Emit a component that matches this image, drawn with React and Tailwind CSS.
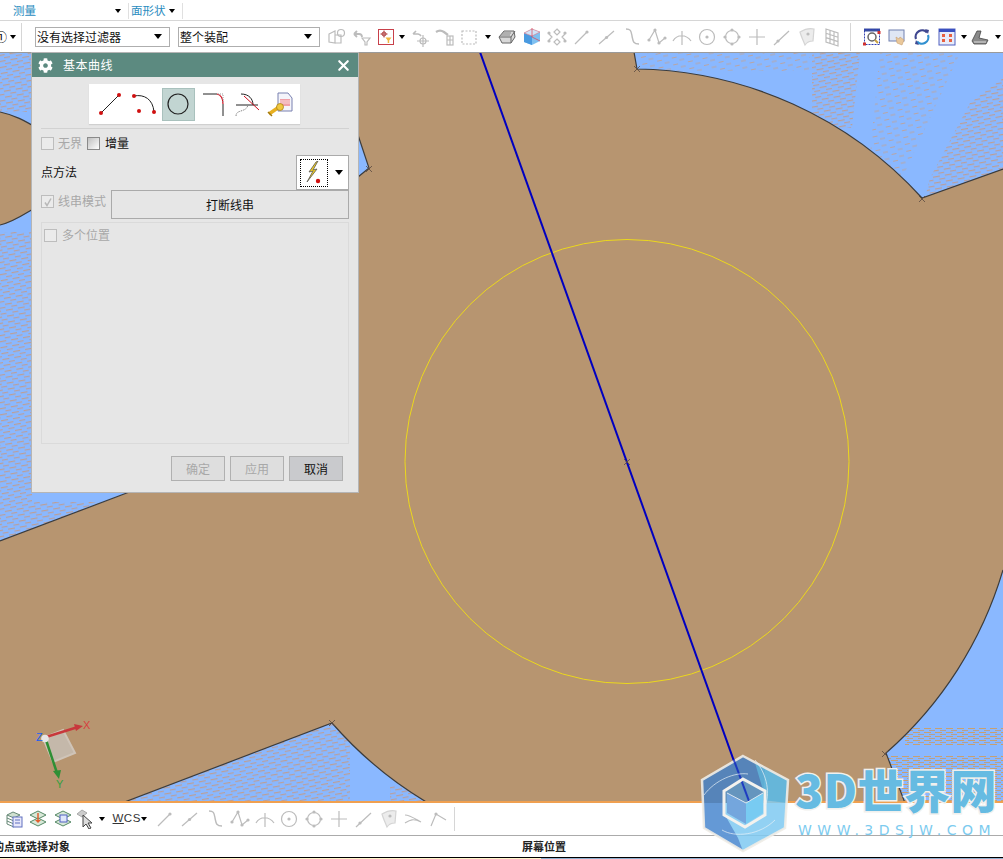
import React from "react";
import { FaCog } from "react-icons/fa";
import { X } from "lucide-react";

const FONT = "font-['Noto_Sans_CJK_SC','Liberation_Sans',sans-serif]";
const G = "#bcbcbc";

const Caret = ({ className = "" }) => (
  <span className={`block w-0 h-0 shrink-0 border-x-[3.5px] border-x-transparent border-t-[4px] border-t-black ${className}`} />
);

const Ic = ({ children, size = 22, box = 22 }) => (
  <svg width={size} height={size} viewBox={`0 0 ${box} ${box}`} fill="none" stroke={G} strokeWidth="1.2" className="shrink-0">
    {children}
  </svg>
);

const Cell = ({ w = "w-[25px]", children }) => <div className={`${w} h-[22px] shrink-0 flex items-center justify-center`}>{children}</div>;

const Dot = ({ x, y, r = 1.6, f = G }) => <circle cx={x} cy={y} r={r} fill={f} stroke="none" />;

const LineEnd = () => <Ic><path d="M4 18 16 6" /><Dot x={16} y={6} /></Ic>;
const LineMid = () => <Ic><path d="M3 18 18 5" /><Dot x={10.5} y={11.5} /></Ic>;
const SCurve = () => <Ic><path d="M5 3c5 0 5 2 6 7s1 8 7 8" strokeWidth="1.4" /></Ic>;
const Spline = () => <Ic><path d="M3 14 9 4l4 13 6-5" /><Dot x={3} y={14} /><Dot x={9} y={4} /><Dot x={13} y={17} /><Dot x={19} y={12} /></Ic>;
const ArcUp = () => <Ic><path d="M2 15C6 8 15 8 20 15M11 5v14" /></Ic>;
const CircleDot = () => <Ic><circle cx="11" cy="11" r="7.5" /><Dot x={11} y={11} /></Ic>;
const CircleQuad = () => <Ic><circle cx="11" cy="11" r="6.5" /><Dot x={11} y={4} /><Dot x={11} y={18} /><Dot x={4} y={11} /><Dot x={18} y={11} /></Ic>;
const Plus = () => <Ic><path d="M11 3v16M3 11h16" /></Ic>;
const LineDotLow = () => <Ic><path d="M3 19 18 5" /><Dot x={7} y={15} /></Ic>;
const Sheet = () => (
  <Ic><path d="M4 6c5-3 10-4 14-3l-1 12c-3 0-6 1-8 4C7 14 5 10 4 6Z" fill="#ececec" stroke="#d4d4d4" /><Dot x={12} y={8} /></Ic>
);
const Grid = () => <Ic><path d="M5 3l12 4v13L5 16ZM9 4.300v13M13 5.700v13M5 7.300l12 4M5 11.600l12 4" /></Ic>;

const Select = ({ w, text, className = "" }) => (
  <div className={`${w} ${className} h-[20px] shrink-0 border border-[#aeaeae] bg-white flex items-center justify-between pl-[1px] pr-[7px] text-[12px] text-[#111]`}>
    <span>{text}</span>
    <Caret className="border-x-[4px] border-t-[5px]" />
  </div>
);

const TopToolbar = () => (
  <div className="h-[31px] shrink-0 bg-white flex items-center">
    <span className="w-[7px] overflow-hidden text-[12px] leading-none flex justify-end"><span className="shrink-0">①</span></span>
    <Caret className="ml-[3px]" />
    <div className="ml-[5px] w-px h-[28px] bg-[#d6d6d6]" />
    <Select w="w-[135px]" text="没有选择过滤器" className="ml-[13px]" />
    <Select w="w-[142px]" text="整个装配" className="ml-[8px]" />
    <div className="ml-[5px] flex">
      <Cell w="w-[24.500px]">
        <Ic><path d="M3 8l6-3v12l-6-1ZM9 9h6v8H9" /><circle cx="15" cy="7" r="3.500" /></Ic>
      </Cell>
      <Cell w="w-[24.500px]">
        <Ic><path d="M3 8h5a3 3 0 0 1 3 3M3 8l3-3M3 8l3 3" strokeWidth="1.8" /><path d="M11 12h8l-3 4v3h-2v-3Z" /></Ic>
      </Cell>
      <Cell w="w-[24.500px]">
        <svg width="16" height="16" viewBox="0 0 16 16" fill="none" className="shrink-0">
          <rect x="0.500" y="0.500" width="15" height="15" stroke="#c8404a" />
          <circle cx="6" cy="5" r="2" stroke="#b04040" />
          <path d="M6 1.500v7M2.500 5h7" stroke="#b04040" />
          <path d="M7.500 8.500h6l-2.300 3v2.500h-1.500v-2.500Z" fill="#f0b840" />
        </svg>
      </Cell>
    </div>
    <Caret className="ml-[0.500px]" />
    <div className="ml-[3px] flex">
      <Cell w="w-[24.500px]">
        <Ic><path d="M4 8h5a4 4 0 0 1 3 2M4 8l3-3" strokeWidth="1.6" /><circle cx="14" cy="15" r="3" /><path d="M14 9v12M8 15h12" /></Ic>
      </Cell>
      <Cell w="w-[24.500px]">
        <Ic><path d="M2 6c3-2 5-2 8 0l4 3" strokeWidth="2.200" /><rect x="13" y="10" width="6" height="9" /><path d="M16 10v9M13 14h6" /></Ic>
      </Cell>
      <Cell w="w-[24.500px]">
        <Ic><rect x="4" y="5" width="14" height="13" strokeDasharray="2 1.500" /></Ic>
      </Cell>
    </div>
    <Caret className="ml-[3px]" />
    <div className="ml-[4px] flex">
      <Cell>
        <svg width="18" height="16" viewBox="0 0 18 16" className="shrink-0">
          <path d="M1 8 6 2h10l1 6-4 6H4Z" fill="#d8d8d8" stroke="#666" />
          <path d="M1 8h12v6M13 8l4-6" fill="none" stroke="#666" />
          <path d="M4 4h9M3 6h9" stroke="#888" />
        </svg>
      </Cell>
      <Cell>
        <svg width="18" height="18" viewBox="0 0 18 18" className="shrink-0">
          <path d="M1 5 9 1l8 3v9l-8 4-8-3Z" fill="#7fc0f0" />
          <path d="M9 8 1 5v9l8 3Z" fill="#4a9ae0" />
          <path d="M1 5 9 1l8 3-8 4Z" fill="#d0e4f8" stroke="#e07080" strokeWidth=".6" />
          <path d="M9 0v9l8 4" fill="none" stroke="#e04050" strokeWidth=".7" />
        </svg>
      </Cell>
      <Cell>
        <Ic><path d="M11 3l3 3-3 3-3-3ZM11 13l3 3-3 3-3-3ZM3 8l3 3-3 3M19 8l-3 3 3 3" /><Dot x={3} y={7} /><Dot x={19} y={7} /><Dot x={3} y={15} /><Dot x={19} y={15} /></Ic>
      </Cell>
      <Cell><LineEnd /></Cell>
      <Cell><LineMid /></Cell>
      <Cell><SCurve /></Cell>
      <Cell><Spline /></Cell>
      <Cell><ArcUp /></Cell>
      <Cell><CircleDot /></Cell>
      <Cell><CircleQuad /></Cell>
      <Cell><Plus /></Cell>
      <Cell><LineDotLow /></Cell>
      <Cell><Sheet /></Cell>
      <Cell><Grid /></Cell>
    </div>
    <div className="ml-[5px] w-px h-[28px] bg-[#d6d6d6]" />
    <div className="ml-[9px] flex">
      <Cell>
        <svg width="18" height="18" viewBox="0 0 18 18" fill="none" className="shrink-0">
          <path d="M1 2h16" stroke="#3a50a0" strokeWidth="3" />
          <rect x="1.500" y="1.500" width="15" height="15" stroke="#3040b0" strokeDasharray="2 1" />
          <circle cx="9" cy="9" r="4" stroke="#666" strokeWidth="1.500" />
          <path d="M12 12l3 3" stroke="#c8a040" strokeWidth="2" />
          <rect x="0" y="14.500" width="3" height="3" fill="#d03030" />
          <rect x="14.500" y="3" width="3" height="3" fill="#d03030" />
        </svg>
      </Cell>
      <Cell>
        <svg width="18" height="18" viewBox="0 0 18 18" fill="none" className="shrink-0">
          <rect x="1" y="2" width="15" height="11" fill="#dfe6f4" stroke="#7080b0" />
          <path d="M8 9l1 6 5 2 2-5-4-3-1 2Z" fill="#eac89a" stroke="#c8a070" strokeWidth=".6" />
        </svg>
      </Cell>
      <Cell>
        <svg width="18" height="18" viewBox="0 0 18 18" fill="none" className="shrink-0">
          <path d="M3 11A6.500 6.500 0 0 1 14 4.500" stroke="#404890" strokeWidth="2.200" />
          <path d="M15 7A6.500 6.500 0 0 1 4 13.500" stroke="#3090d0" strokeWidth="2.200" />
          <path d="M12 1l4 1-1 4ZM6 17l-4-1 1-4Z" fill="#404890" />
        </svg>
      </Cell>
      <Cell>
        <svg width="18" height="18" viewBox="0 0 18 18" fill="none" className="shrink-0">
          <rect x="1" y="1" width="16" height="16" fill="#e8ecfa" stroke="#5060c0" />
          <path d="M1 2.500h16" stroke="#3a50c0" strokeWidth="3" />
          <path d="M4 6h3v3H4ZM11 6h3v3h-3ZM4 11h3v3H4ZM11 11h3v3h-3Z" fill="#e86040" />
        </svg>
      </Cell>
    </div>
    <Caret className="ml-[1.500px]" />
    <Cell>
      <svg width="20" height="18" viewBox="0 0 20 18" className="shrink-0">
        <path d="M2 13 7 3h4l-2 7 9 2-2 4H4Z" fill="#8a8a8a" stroke="#444" strokeWidth=".8" />
        <path d="M4 14h12" stroke="#ddd" />
      </svg>
    </Cell>
    <Caret className="ml-[2.500px]" />
  </div>
);

const BottomToolbar = () => (
  <div className="h-[32px] shrink-0 bg-white border-b border-[#ababab] flex items-center box-content">
    <div className="ml-[1.500px] flex">
      <Cell w="w-[24.500px]">
        <svg width="18" height="18" viewBox="0 0 18 18" fill="none" className="shrink-0">
          <path d="M2 5l6-3 7 3-6 3Z" fill="#cfe0cf" stroke="#687" />
          <path d="M2 8l7 3M2 11l7 3M2 5v9l7 3" stroke="#687" />
          <rect x="8" y="7" width="9" height="10" fill="#e8e8fa" stroke="#6070c0" />
          <path d="M10 10h5M10 13h5" stroke="#6070c0" />
        </svg>
      </Cell>
      <Cell w="w-[24.500px]">
        <svg width="18" height="18" viewBox="0 0 18 18" fill="none" className="shrink-0">
          <path d="M1 5l8-4 8 4-8 4Z" fill="#d8e8d8" stroke="#586" />
          <path d="M1 12l8-4 8 4-8 4Z" fill="#d8e8d8" stroke="#586" />
          <path d="M9 3v8" stroke="#e06030" strokeWidth="1.500" />
          <path d="M6 10h6l-3 3Z" fill="#e06030" />
        </svg>
      </Cell>
      <Cell w="w-[24px]">
        <svg width="18" height="18" viewBox="0 0 18 18" fill="none" className="shrink-0">
          <path d="M1 5l8-4 8 4-8 4Z" fill="#d8e8d8" stroke="#586" />
          <path d="M1 12l8-4 8 4-8 4Z" fill="#d8e8d8" stroke="#586" />
          <rect x="6" y="5" width="7" height="7" fill="#dfe6fa" stroke="#5060c0" />
        </svg>
      </Cell>
    </div>
    <Cell w="w-[20px]">
      <svg width="18" height="20" viewBox="0 0 18 20" fill="none" className="shrink-0">
        <path d="M1 5l5-4 5 3-5 4Z" fill="#ccc" stroke="#aaa" />
        <path d="M7 6v12l3-3 3 5 2-1-3-5h4Z" fill="#ddd" stroke="#444" />
      </svg>
    </Cell>
    <Caret className="ml-[4px]" />
    <span className="ml-[8px] w-[24px] text-[11.500px] leading-none tracking-[0.5px] text-[#333] font-['Liberation_Sans',sans-serif]">
      <span className="underline">W</span>CS
    </span>
    <Caret className="ml-[4px]" />
    <div className="ml-[6.500px] flex">
      <Cell w="w-[24.800px]"><LineEnd /></Cell>
      <Cell w="w-[24.800px]"><LineMid /></Cell>
      <Cell w="w-[24.800px]"><SCurve /></Cell>
      <Cell w="w-[24.800px]"><Spline /></Cell>
      <Cell w="w-[24.800px]"><ArcUp /></Cell>
      <Cell w="w-[24.800px]"><CircleDot /></Cell>
      <Cell w="w-[24.800px]"><CircleQuad /></Cell>
      <Cell w="w-[24.800px]"><Plus /></Cell>
      <Cell w="w-[24.800px]"><LineDotLow /></Cell>
      <Cell w="w-[24.800px]"><Sheet /></Cell>
      <Cell w="w-[24.800px]"><Ic><path d="M3 7c5 0 12 5 16 7M3 15c5-3 8-5 16-1" /></Ic></Cell>
      <Cell w="w-[24.800px]"><Ic><path d="M4 18 9 6l10 6" /><Dot x={9} y={6} /></Ic></Cell>
    </div>
    <div className="ml-[3px] w-px h-[24px] bg-[#d6d6d6]" />
  </div>
);

const Mark = ({ x, y }) => <path d={`M${x - 3} ${y - 3}l6 6M${x + 3} ${y - 3}l-6 6`} stroke="#5a4a40" strokeWidth=".8" fill="none" />;

const INK = "#3c3c3c";

const Viewport = () => (
  <svg viewBox="0 53 1003 748" className="absolute inset-0 w-full h-full block">
    <defs>
      <pattern id="heavy" width="12" height="6" patternUnits="userSpaceOnUse" patternTransform="rotate(-10)">
        <rect x="0" y="0" width="7" height="1.200" fill="#bc9f96" />
        <rect x="6" y="3" width="7" height="1.200" fill="#b8a0a0" />
      </pattern>
      <pattern id="sparse" width="15" height="7" patternUnits="userSpaceOnUse" patternTransform="rotate(-12)">
        <rect x="0" y="0" width="5" height="1" fill="#b8a5a5" />
        <rect x="7" y="3.500" width="5" height="1" fill="#b8a5a5" />
      </pattern>
      <pattern id="warm" width="11" height="4" patternUnits="userSpaceOnUse">
        <rect x="0" y="0" width="7" height="1" fill="#c8a070" />
        <rect x="5" y="2" width="7" height="1" fill="#b8a08c" />
      </pattern>
    </defs>
    <rect x="0" y="52" width="1003" height="751" fill="#8ab8ff" />
    <rect x="0" y="52" width="32" height="60" fill="url(#heavy)" />
    <path d="M0 232h32v270h100l-132 44Z" fill="url(#heavy)" />
    <path d="M812 53h48l-8 75h-40Z" fill="url(#heavy)" />
    <path d="M640 53h170v18H640Z" fill="url(#sparse)" />
    <path d="M880 53h80l-60 130-30-30Z" fill="url(#sparse)" />
    <path d="M1003 78v92l-78 28 5-20 40-75Z" fill="url(#heavy)" />
    <path d="M122 803 332 723l18 12v68Z" fill="url(#heavy)" />
    <path d="M390 785h40v18h-40Z" fill="url(#heavy)" />
    <path d="M905 727h98v18h-98Z" fill="url(#warm)" />
    <path d="M885 755h118v48H885Z" fill="url(#warm)" />

    <path
      d="M300 52H634L637 69A394 394 0 0 1 922 198L1003 169V570A390 390 0 0 1 886 753L905 803H428A394 394 0 0 1 332 723L122 803H0V541L130 492 358 177 369 168 358 135 340 52Z"
      fill="#b79570"
    />
    <path d="M634 52 637 69A394 394 0 0 1 922 198L1003 169" fill="none" stroke={INK} strokeWidth="1.200" />
    <path d="M1003 570A390 390 0 0 1 886 753L905 803" fill="none" stroke={INK} strokeWidth="1.200" />
    <path d="M428 803A394 394 0 0 1 332 723L122 803" fill="none" stroke={INK} strokeWidth="1.200" />
    <path d="M0 541 132 491" fill="none" stroke={INK} strokeWidth="1.200" />
    <path d="M358 177 369 168 358 135" fill="none" stroke={INK} strokeWidth="1.200" />
    <path d="M0 112C14 115 24 120 40 130V205C24 214 14 222 0 225Z" fill="#b79570" />
    <path d="M0 112C14 115 24 120 40 130M40 205C24 214 14 222 0 225" fill="none" stroke={INK} strokeWidth="1.200" />
    <Mark x={637} y={69} />
    <Mark x={922} y={199} />
    <Mark x={369} y={169} />
    <Mark x={332} y={723} />
    <Mark x={885} y={754} />

    <circle cx="627" cy="461.500" r="222" fill="none" stroke="#ecd81c" strokeWidth="1" />
    <path d="M480 52 749 803" stroke="#0000c0" strokeWidth="2" />
    <Mark x={627} y={462} />

    <path d="M43 738 63 730 75 753 53 762Z" fill="#c4b8aa" stroke="#cfc4b8" strokeWidth="2" />
    <path d="M46 737 78 727" stroke="#c8383c" strokeWidth="2.500" />
    <path d="M74 724 83 726 76 731Z" fill="#c8383c" />
    <path d="M46 740 57 773" stroke="#2f8f35" strokeWidth="2.500" />
    <path d="M53 771 61 770 59 779Z" fill="#2f8f35" />
    <circle cx="45" cy="738.500" r="3.800" fill="#e6e6e6" />
    <text x="83" y="729" fontSize="11" fill="#d84040" fontFamily="Liberation Sans">X</text>
    <text x="56" y="788" fontSize="11" fill="#35a040" fontFamily="Liberation Sans">Y</text>
    <text x="36" y="741" fontSize="11" fill="#2060f0" fontFamily="Liberation Sans">Z</text>
  </svg>
);

const Check = ({ checked, strong, className = "" }) => (
  <span
    className={`block w-[13px] h-[13px] shrink-0 border ${strong ? "border-[#8a8a8a] bg-gradient-to-br from-[#c0c0c0] to-white" : "border-[#bdbdbd] bg-[#ebebeb]"} ${className} flex items-center justify-center`}
  >
    {checked && (
      <svg width="10" height="10" viewBox="0 0 10 10" fill="none">
        <path d="M2 5.500 4 8.500 8 1.500" stroke="#b8b8b8" strokeWidth="1.500" />
      </svg>
    )}
  </span>
);

const StripTile = ({ on, children }) => (
  <div className={`w-[33px] h-[33px] shrink-0 flex items-center justify-center ${on ? "bg-[#c2d5d2] border border-[#a9c1bd]" : ""}`}>{children}</div>
);

const Red = ({ x, y }) => <circle cx={x} cy={y} r="2" fill="#d01010" />;

const Dialog = () => (
  <div className={`absolute left-[31px] -top-[1px] w-[328px] h-[441px] bg-[#e6e6e6] border border-[#b5b5b5] flex flex-col text-[12px] ${FONT}`}>
    <div className="h-[24px] shrink-0 bg-[#5c8a80] flex items-center pl-[6px] pr-[6px] text-white text-[12px]">
      <FaCog className="w-[15px] h-[15px] text-white" />
      <span className="ml-[10px] tracking-[0.5px]">基本曲线</span>
      <X className="ml-auto w-[17px] h-[17px] text-white" strokeWidth={3} />
    </div>
    <div className="mt-[7px] ml-[57px] w-[211px] h-[40px] bg-white flex items-center pl-[4.500px] shadow-[0_1px_1px_#d0d0d0]">
      <div className="flex items-center gap-[1px]">
        <StripTile>
          <svg width="26" height="26" viewBox="0 0 26 26" fill="none"><path d="M4 22 22 4" stroke="#222" /><Red x={4} y={22} /><Red x={22} y={4} /></svg>
        </StripTile>
        <StripTile>
          <svg width="26" height="26" viewBox="0 0 26 26" fill="none"><path d="M3 5c10-2 19 3 20 16" stroke="#222" /><Red x={3} y={5} /><Red x={23} y={21} /><Red x={8} y={20} /></svg>
        </StripTile>
        <StripTile on>
          <svg width="24" height="24" viewBox="0 0 24 24" fill="none"><circle cx="12" cy="12" r="10" stroke="#222" strokeWidth="1.200" /></svg>
        </StripTile>
        <StripTile>
          <svg width="26" height="26" viewBox="0 0 26 26" fill="none"><path d="M4 3h14M24 13v12" stroke="#222" /><path d="M18 3c4 1 6 5 6 10" stroke="#d01020" strokeWidth="1.200" /><path d="M19 3h5v8" stroke="#999" strokeDasharray="1 1" /></svg>
        </StripTile>
        <StripTile>
          <svg width="26" height="26" viewBox="0 0 26 26" fill="none"><path d="M3 14h22" stroke="#222" /><path d="M8 3c8 0 12 5 12 11" stroke="#222" /><path d="M11 5l15 14" stroke="#d01020" /><path d="M3 25c0-7 10-3 12-11" stroke="#888" strokeDasharray="1.500 1" /></svg>
        </StripTile>
        <StripTile>
          <svg width="26" height="28" viewBox="0 0 26 28" fill="none">
            <path d="M11 3h10l4 5v13H11Z" fill="#f4f4fa" stroke="#7880b0" />
            <path d="M13 9h10v7H13Z" fill="#f0a0a8" />
            <path d="M13 11h10M13 13h10" stroke="#f8d8d8" />
            <path d="M2 24l10-7" stroke="#e8b020" strokeWidth="3.500" />
            <circle cx="13" cy="17" r="3.500" fill="#f0c840" stroke="#a07810" strokeWidth=".7" />
            <path d="M1 22l4 4" stroke="#a07810" strokeWidth="1.500" />
          </svg>
        </StripTile>
      </div>
    </div>
    <div className="mt-[4px] mx-[9px] h-px bg-[#d2d2d2]" />
    <div className="mt-[7px] ml-[9px] h-[14px] flex items-center">
      <Check />
      <span className="ml-[4px] text-[#a8a8a8]">无界</span>
      <Check strong className="ml-[5px]" />
      <span className="ml-[5px] text-[#111]">增量</span>
    </div>
    <div className="mt-[5px] ml-[9px] mr-[9px] h-[35px] flex items-center justify-between">
      <span className="text-[#111] -mt-[1px]">点方法</span>
      <div className="w-[53px] h-[35px] bg-white border border-[#aaaaaa] flex items-center pl-[3px]">
        <div className="w-[28px] h-[28px] border border-dotted border-black flex items-center justify-center">
          <svg width="22" height="24" viewBox="0 0 22 24" fill="none">
            <path d="M13 1 6 11l4-1-6 11 10-13-4 1 5-9Z" fill="#f4d020" stroke="#555" strokeWidth=".8" />
            <circle cx="15" cy="20" r="2.200" fill="#d01010" />
          </svg>
        </div>
        <Caret className="ml-[7px] border-x-[4px] border-t-[5px]" />
      </div>
    </div>
    <div className="ml-[9px] mr-[9px] h-[30px] flex items-start">
      <Check checked className="mt-[5px]" />
      <span className="ml-[4px] mt-[1.500px] w-[49px] text-[#a8a8a8]">线串模式</span>
      <div className="ml-[4px] flex-1 h-[29px] border border-[#aaaaaa] flex items-center justify-center text-[#111]">打断线串</div>
    </div>
    <div className="mt-[2px] mx-[9px] h-[222px] border border-[#dadada]">
      <div className="mt-[3px] ml-[2px] flex items-center">
        <Check />
        <span className="ml-[5px] text-[#a8a8a8]">多个位置</span>
      </div>
    </div>
    <div className="mt-[12px] ml-[139px] flex gap-[5px]">
      <div className="w-[54px] h-[25px] border border-[#b0b0b0] bg-[#dedede] text-[#a8a8a8] flex items-center justify-center">确定</div>
      <div className="w-[54px] h-[25px] border border-[#b0b0b0] bg-[#dedede] text-[#a8a8a8] flex items-center justify-center">应用</div>
      <div className="w-[54px] h-[25px] border border-[#b0b0b0] bg-[#c9cacd] text-[#111] flex items-center justify-center">取消</div>
    </div>
  </div>
);

const Logo = () => (
  <>
    <svg viewBox="698 752 96 104" className="absolute left-[698px] top-[752px] w-[96px] h-[104px]" fill="none">
      <path d="M743 756 788 780 785 828 743 851 704 828 702 780Z" fill="#7fc9f1" fillOpacity=".85" />
      <path d="M702 780 743 756 765 768 763 790 743 779 725 790 725 815 738 838 743 851 704 828Z" fill="#5c8fd0" fillOpacity=".85" />
      <path d="M702 780 743 756 765 768 763 803H702Z" fill="#4f78a8" fillOpacity=".6" />
      <path d="M755 763 788 780 787 803 763 800 763 790Z" fill="#60b4d8" fillOpacity=".85" />
      <path d="M743 756 788 780 785 828 743 851 704 828 702 780Z" stroke="#f0ece6" strokeWidth="2.500" strokeOpacity=".9" />
      <path d="M727 793 746 803V824L727 813Z" fill="#74a6dd" />
      <path d="M746 803 763 793V813L746 824Z" fill="#78cbf2" />
      <path d="M733.500 759 749 801" stroke="#0a20c0" strokeWidth="2" strokeOpacity=".75" />
      <path d="M743 779 765 791V815L745 827 724 815V791Z" stroke="#f4f2ee" strokeWidth="3" />
      <path d="M727 793 746 803 763 793" stroke="#dfe8f0" />
      <path d="M704 795C715 780 735 772 748 774M722 830C735 838 760 835 775 820M755 760C768 775 770 795 765 806" stroke="#e8f0f6" strokeWidth=".7" />
    </svg>
    <div className="absolute left-[795px] top-[758px] h-[60px] flex items-center text-[46px] leading-none font-black tracking-[0.5px] text-[#66bbe2] [-webkit-text-stroke:3px_#f0f0ee] [paint-order:stroke_fill] font-['Noto_Sans_CJK_SC',sans-serif]">
      3D世界网
    </div>
    <div className="absolute left-[798px] top-[823px] text-[14px] leading-none tracking-[5.500px] text-[#7ccbef] font-['DejaVu_Sans',sans-serif]">
      WWW.3DSJW.COM
    </div>
  </>
);

export default function App() {
  return (
    <div className={`relative w-[1003px] h-[859px] overflow-hidden bg-white flex flex-col ${FONT}`}>
      <div className="h-[21px] shrink-0 bg-white border-b border-[#d6d6d6] flex items-center pt-[1px] text-[#2a8cc0] text-[11.500px]">
        <span className="ml-[13px] w-[23px] whitespace-nowrap">测量</span>
        <Caret className="ml-[79px]" />
        <div className="ml-[7px] w-px h-[16px] bg-[#e0e0e0]" />
        <span className="ml-[2px] w-[35px] whitespace-nowrap">面形状</span>
        <Caret className="ml-[3px]" />
        <div className="ml-[7px] w-px h-[16px] bg-[#e0e0e0]" />
      </div>
      <TopToolbar />
      <div className="relative flex-1 border-t border-[#9a9a9a] border-b-2 border-b-[#f0a050]">
        <Viewport />
        <Dialog />
      </div>
      <BottomToolbar />
      <div className="h-[21px] shrink-0 bg-white flex items-center text-[11px] font-bold text-[#222]">
        <span className="-ml-[7px] w-[77px] shrink-0 whitespace-nowrap">的点或选择对象</span>
        <span className="ml-[452px] whitespace-nowrap">屏幕位置</span>
      </div>
      <div className="h-px shrink-0 bg-black" />
      <div className="h-px shrink-0 flex bg-[#8fb0d0]">
        <div className="w-[541px] bg-[#fff4c8]" />
      </div>
      <Logo />
    </div>
  );
}
